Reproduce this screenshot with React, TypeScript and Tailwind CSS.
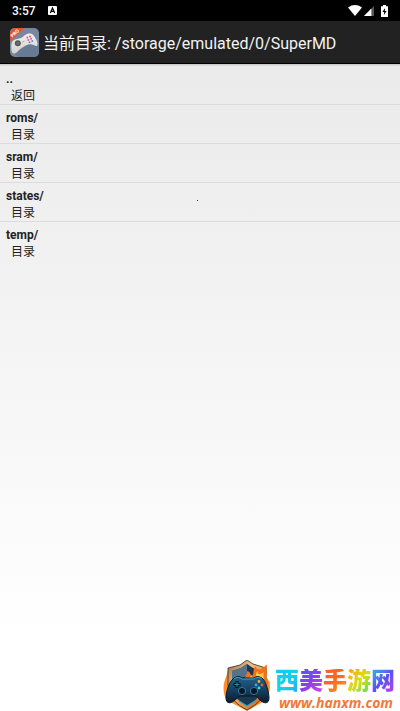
import React, { useState } from 'react';

const entries = [
  { name: '..', detail: '返回' },
  { name: 'roms/', detail: '目录' },
  { name: 'sram/', detail: '目录' },
  { name: 'states/', detail: '目录' },
  { name: 'temp/', detail: '目录' },
];

const brand = [
  { char: '西', color: 'from-[#12c8f4] via-[#10d4e4] to-[#2ba4f0]' },
  { char: '美', color: 'from-[#3d5cf0] via-[#8a3cf0] to-[#e03ce0]' },
  { char: '手', color: 'from-[#f0602c] via-[#ff6a20] to-[#ff9a18]' },
  { char: '游', color: 'from-[#ff9c10] via-[#d8dc18] to-[#30d850]' },
  { char: '网', color: 'from-[#20b4e8] via-[#5a50f0] to-[#c02cf0]' },
];

const StatusBar: React.FC = () => (
  <div className="flex h-[21px] items-center bg-black pl-3 pr-3 text-white">
    <span className="text-[12px] leading-4 font-medium">3:57</span>
    <svg className="ml-3 h-[9px] w-[9px]" viewBox="0 0 9 9">
      <rect width="9" height="9" rx="1" fill="#fff" />
      <path d="M2.3 7 L4.5 2 L6.7 7 M3.2 5.4 H5.8" fill="none" stroke="#000" strokeWidth="1.2" />
    </svg>
    <div className="ml-auto flex items-center">
      <svg className="h-[11px] w-[14px]" viewBox="0 0 14 11">
        <path d="M0 2.4 Q7 -2.4 14 2.4 L7 11 Z" fill="#fff" />
      </svg>
      <svg className="ml-0.5 h-[10px] w-[10px]" viewBox="0 0 10 10">
        <path d="M10 0 V10 H0 Z" fill="#555" />
        <path d="M7.4 2.6 V10 H0 Z" fill="#fff" />
      </svg>
      <svg className="ml-[7px] h-[12px] w-[7px]" viewBox="0 0 7 12">
        <path d="M2 0 H5 V1.2 H7 V12 H0 V1.2 H2 Z" fill="#fff" />
        <path d="M4.1 3 L1.4 7 H3.2 L2.8 10.2 L5.6 6 H3.8 Z" fill="#000" />
      </svg>
    </div>
  </div>
);

const AppIcon: React.FC = () => (
  <svg className="h-[29px] w-[29px] shrink-0" viewBox="0 0 29 29">
    <defs>
      <clipPath id="icon-shape"><rect width="29" height="29" rx="5" /></clipPath>
      <linearGradient id="pad" x1="0" y1="0" x2="0" y2="1">
        <stop offset="0" stopColor="#f4f2ed" />
        <stop offset="1" stopColor="#d2d0cc" />
      </linearGradient>
    </defs>
    <g clipPath="url(#icon-shape)">
      <rect width="29" height="29" fill="#76879f" />
      <path d="M4 25 L8 29 H29 V18 L20 16 Z" fill="#687a95" />
      <path d="M0 0 H14.5 L0 13.5 Z" fill="#e3562a" />
      <path d="M0 0 H4.5 L0 4.5 Z" fill="#7b7f8c" />
      <path d="M1.4 22 C1 18 1 14.5 3.2 12.6 C5.5 10.4 8.5 11.2 11 10 C14 8.6 15.5 6 18.5 5.6 C21.5 5.2 23.2 6.6 24.4 8.6 C26.2 11.4 27.8 14.4 27.5 16.8 C27.2 18.6 25.6 18 24 17.2 C21.3 15.9 18.8 16.1 15.6 17.6 C12 19.3 9.4 21.8 7 24.2 C4.2 26.8 1.8 25.6 1.4 22 Z" fill="url(#pad)" />
      <circle cx="7.8" cy="15.2" r="3" fill="#54575a" />
      <path d="M6.3 15.7 L9.3 14.7 M7.3 13.7 L8.3 16.7" stroke="#73777b" />
      <path d="M12.2 14.2 L14.4 13.2" stroke="#a7a49e" />
      <g fill="#e751a5">
        <circle cx="17.3" cy="9.6" r="1" />
        <circle cx="20" cy="8.4" r="1" fill="#ef4d61" />
        <circle cx="18.3" cy="12" r="1" />
        <circle cx="21.1" cy="10.8" r="1" />
        <circle cx="19.6" cy="14.2" r="1" fill="#5090df" />
        <circle cx="22.3" cy="13" r="1" fill="#5090df" />
      </g>
      <text x="-4.9" y="8.8" transform="rotate(-43)" fontSize="4.8" fontWeight="700" fill="#fff">PRO</text>
    </g>
  </svg>
);

const Shield: React.FC = () => (
  <svg className="h-[51px] w-[48px] shrink-0" viewBox="0 0 48 51">
    <defs>
      <linearGradient id="rim" x1="0" y1="0" x2="1" y2="1">
        <stop offset="0" stopColor="#8a6a4c" />
        <stop offset=".35" stopColor="#f0bf86" />
        <stop offset=".7" stopColor="#e58a3a" />
        <stop offset="1" stopColor="#b84d14" />
      </linearGradient>
      <linearGradient id="controller" x1="0" y1="0" x2="0" y2="1">
        <stop offset="0" stopColor="#24638a" />
        <stop offset=".5" stopColor="#154061" />
        <stop offset="1" stopColor="#0b1b32" />
      </linearGradient>
    </defs>
    <path d="M3 17 C-1 26 0 36 5 42 L9 43 L24 51 L38 43 C45 40 49 29 46 20 L43 23 L44 5 L38 10 L24 8 L5 10 Z" fill="#ff8e2a" />
    <path d="M24 0 L30 4 L43 8 V25 C43 37 35 44 24 50 C13 44 5 37 5 25 V8 L17 5 Z" fill="url(#rim)" stroke="#3a2b25" strokeWidth=".8" />
    <path d="M24 4 L30 8 L39 11 V25 C39 35 33 41 24 46 C15 41 9 35 9 25 V11 L18 8 Z" fill="#1b3850" />
    <path d="M24 4 L18 8 L9 11 V21 L24 16 Z" fill="#57738a" />
    <path d="M22 24 C19 18 25 15 24 11 C28 12 27 15 29 16 C32 13 29 9 33 6 C33 10 37 12 44 4 C42 10 45 13 43 17 C46 19 45 23 44 26 Z" fill="#f4701a" />
    <path d="M26 24 C24 20 28 18 28 15 L31 19 C34 17 32 13 35 11 C34 15 38 15 41 12 C39 17 42 19 41 24 Z" fill="#ffd04d" />
    <path d="M10 19 C13 16 17 16 19 18 H31 C33 16 37 16 40 19 C43 22 46 32 46 38 C46 44 41 44 37 40 L33 36 H17 L12 40 C8 44 3 44 3 38 C3 32 6 22 10 19 Z" fill="url(#controller)" stroke="#0c1727" />
    <path d="M11 19 C13 17 17 17 19 19 H31 C33 17 37 17 39 19" fill="none" stroke="#3da5ca" />
    <path d="M14 21 V28 M10.5 24.5 H17.5" stroke="#071323" strokeWidth="3" />
    <path d="M14 22 V27 M11.5 24.5 H16.5" stroke="#3a87aa" />
    <circle cx="19" cy="31" r="3.6" fill="#091628" stroke="#347a9b" />
    <circle cx="31" cy="31" r="3.6" fill="#091628" stroke="#347a9b" />
    <circle cx="36" cy="21.5" r="1.4" fill="#f5aa2e" />
    <circle cx="39" cy="25" r="1.4" fill="#ef5b37" />
    <circle cx="33" cy="25" r="1.4" fill="#37aee0" />
    <circle cx="36" cy="28" r="1.4" fill="#4fd0dd" />
    <path d="M16 41 L24 46 L32 41" fill="none" stroke="#2ca6cc" strokeWidth="1.4" />
  </svg>
);

const App: React.FC = () => {
  const [path, setPath] = useState('/storage/emulated/0/SuperMD');

  const handleOpen = (name: string) => {
    if (name === '..') {
      setPath(path.slice(0, path.lastIndexOf('/')) || '/');
    } else {
      setPath(`${path}/${name.replace('/', '')}`);
    }
  };

  return (
    <div className="relative flex min-h-screen flex-col bg-linear-to-b from-[#e8e8e8] to-white to-90% font-[Roboto,'Noto_Sans_CJK_SC',sans-serif]">
      <StatusBar />
      <header className="flex h-[43px] items-center gap-1 border-b border-black bg-[#222] pl-2.5 text-[#f3f3f3]">
        <AppIcon />
        <h1 className="truncate pt-[3px] text-[16px] leading-6">当前目录: {path}</h1>
      </header>

      <main className="flex-1">
        <div className="h-0.5 bg-linear-to-b from-[#c4c4c4] to-[#e2e2e2]" />
        <ul>
          {entries.map((entry) => (
            <li key={entry.name} className="border-b border-[#dcdcdc] last:border-b-0">
              <button onClick={() => handleOpen(entry.name)} className="block w-full px-1.5 pt-[5px] text-left text-[#222]">
                <span className="block text-[12px] leading-[17px] font-bold">{entry.name}</span>
                <span className="block pl-[5px] text-[12px] leading-4">{entry.detail}</span>
              </button>
            </li>
          ))}
        </ul>
      </main>

      <span className="absolute top-[200px] left-[197px] h-px w-px bg-[#333]" />

      <footer className="flex items-end justify-end pr-[5px]">
        <Shield />
        <div className="ml-1">
          <p className="mb-0.5 flex text-[24px] leading-6 font-black">
            {brand.map((item) => (
              <span key={item.char} className={`bg-linear-to-br bg-clip-text text-transparent ${item.color}`}>{item.char}</span>
            ))}
          </p>
          <a href="http://www.hanxm.com" className="block pl-1 font-['Open_Sans',sans-serif] text-[14px] leading-4 font-bold text-[#f4773a] italic">www.hanxm.com</a>
        </div>
      </footer>
    </div>
  );
};

export default App;
